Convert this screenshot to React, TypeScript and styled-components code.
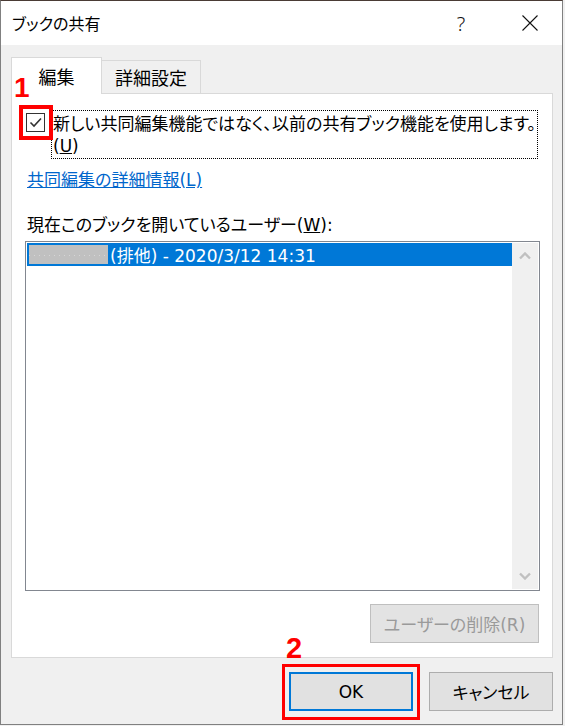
import React from "react";
import styled, { createGlobalStyle } from "styled-components";

const UI_FONT = `"DejaVu Sans", "Noto Sans CJK JP", sans-serif`;

const GlobalStyle = createGlobalStyle`
  html, body { margin: 0; padding: 0; background: #f0f0f0; }
  body { font-family: ${UI_FONT}; }
`;

const Window = styled.div`
  width: 563px;
  height: 725px;
  box-sizing: border-box;
  border: 1px solid #808080;
  border-top-color: #4a3b35;
  background: #f0f0f0;
  display: flex;
  flex-direction: column;
  font-family: ${UI_FONT};
  font-size: 17px;
  color: #000;
  font-feature-settings: "palt";
`;

const TitleBar = styled.div`
  height: 44px;
  flex-shrink: 0;
  background: #fff;
  display: flex;
  align-items: center;
  padding: 0 9px 0 11px;
`;

const Title = styled.div`
  flex: 1;
  font-size: 16px;
  font-family: "Noto Sans CJK JP", sans-serif;
`;

const CaptionButton = styled.div<{ $w: number; $gap?: number }>`
  width: ${(p) => p.$w}px;
  height: 44px;
  margin-right: ${(p) => p.$gap ?? 0}px;
  display: flex;
  align-items: center;
  justify-content: center;
  font-family: "Noto Sans", sans-serif;
  font-weight: 300;
  font-size: 20px;
  color: #111;
`;

const Body = styled.div`
  flex: 1;
  display: flex;
  flex-direction: column;
  padding: 12px 9px 0 10px;
`;

const TabStrip = styled.div`
  display: flex;
  align-items: flex-end;
  height: 36px;
`;

const Tab = styled.div<{ $active?: boolean; $w: number }>`
  box-sizing: border-box;
  width: ${(p) => p.$w}px;
  height: ${(p) => (p.$active ? 37 : 33)}px;
  margin-bottom: ${(p) => (p.$active ? -1 : 0)}px;
  margin-left: ${(p) => (p.$active ? 0 : -1)}px;
  position: relative;
  z-index: ${(p) => (p.$active ? 1 : 0)};
  border: 1px solid #d9d9d9;
  border-bottom: none;
  background: ${(p) => (p.$active ? "#fff" : "#f0f0f0")};
  display: flex;
  align-items: center;
  justify-content: center;
  font-size: 18px;
`;

const Panel = styled.div`
  box-sizing: border-box;
  height: 565px;
  border: 1px solid #d9d9d9;
  background: #fff;
  padding: 16px 12px 0 13px;
  display: flex;
  flex-direction: column;
`;

const CheckRow = styled.div`
  display: flex;
  align-items: flex-start;
  margin-left: 1px;
`;

const CheckWrap = styled.div`
  position: relative;
  margin-top: 3px;
  flex-shrink: 0;
`;

const CheckBox = styled.div`
  box-sizing: border-box;
  width: 19px;
  height: 19px;
  border: 1px solid #333;
  background: #fff;
  display: flex;
  align-items: center;
  justify-content: center;
`;

const RedFrame = styled.div<{ $t: number; $r: number; $b: number; $l: number; $w: number }>`
  position: absolute;
  z-index: 2;
  top: -${(p) => p.$t}px;
  right: -${(p) => p.$r}px;
  bottom: -${(p) => p.$b}px;
  left: -${(p) => p.$l}px;
  border: ${(p) => p.$w}px solid #ff0000;
  pointer-events: none;
`;

const Marker = styled.div<{ $top: number; $left: number; $size: number }>`
  position: absolute;
  z-index: 2;
  top: ${(p) => p.$top}px;
  left: ${(p) => p.$left}px;
  font-family: "Liberation Sans", Arial, sans-serif;
  font-weight: 700;
  font-size: ${(p) => p.$size}px;
  line-height: 1;
  color: #ff0000;
`;

const FocusBox = styled.div`
  flex: 1;
  min-width: 0;
  margin: 0 2px 0 6px;
  border: 1px dotted #000;
  padding: 2px 2px 1px 1px;
  line-height: 22px;
  white-space: nowrap;
`;

const Under = styled.span`
  text-decoration: underline;
`;

const Link = styled.a`
  display: block;
  width: fit-content;
  margin: 10px 0 0 2px;
  line-height: 22px;
  color: #0066cc;
  text-decoration: underline;
  cursor: pointer;
`;

const Label = styled.div`
  margin: 23px 0 0 2px;
  line-height: 22px;
`;

const ListBox = styled.div`
  box-sizing: border-box;
  margin-top: 5px;
  height: 350px;
  border: 1px solid #828790;
  padding: 1px;
  display: flex;
  background: #fff;
`;

const Items = styled.div`
  flex: 1;
`;

const SelectedRow = styled.div`
  height: 23px;
  background: #0078d7;
  color: #fff;
  display: flex;
  align-items: center;
  white-space: nowrap;
`;

const Redacted = styled.div`
  width: 79px;
  height: 19px;
  margin: 0 2px 0 2px;
  background-color: #c0c0c0;
  background-image: radial-gradient(circle, #d6d6d6 0.8px, transparent 1px);
  background-size: 5px 19px;
  background-position: 3px 1px;
  background-repeat: repeat-x;
`;

const ScrollBar = styled.div`
  width: 26px;
  background: #f0f0f0;
  display: flex;
  flex-direction: column;
  justify-content: space-between;
`;

const ScrollArrow = styled.div`
  height: 26px;
  display: flex;
  align-items: center;
  justify-content: center;
`;

const Button = styled.div<{ $primary?: boolean; $disabled?: boolean; $w: number }>`
  box-sizing: border-box;
  width: ${(p) => p.$w}px;
  height: 39px;
  display: flex;
  align-items: center;
  justify-content: center;
  background: ${(p) => (p.$disabled ? "#e3e3e3" : "#e1e1e1")};
  border: ${(p) =>
    p.$primary ? "2px solid #0078d7" : p.$disabled ? "1px solid #bfbfbf" : "1px solid #adadad"};
  color: ${(p) => (p.$disabled ? "#9a9a9a" : "#000")};
  white-space: nowrap;
`;

const DeleteRow = styled.div`
  display: flex;
  justify-content: flex-end;
  margin: 13px 1px 0 0;
`;

const Footer = styled.div`
  display: flex;
  justify-content: flex-end;
  gap: 16px;
  padding-top: 14px;
`;

const ButtonWrap = styled.div`
  position: relative;
`;

const Chevron = ({ down }: { down?: boolean }) => (
  <svg width="12" height="8" viewBox="0 0 12 8">
    <polyline
      points={down ? "1,1.5 6,6.5 11,1.5" : "1,6.5 6,1.5 11,6.5"}
      fill="none"
      stroke="#c0c0c0"
      strokeWidth="2.4"
    />
  </svg>
);

export default function App() {
  return (
    <>
      <GlobalStyle />
      <Window>
        <TitleBar>
          <Title>ブックの共有</Title>
          <CaptionButton $w={40} $gap={26}>?</CaptionButton>
          <CaptionButton $w={46}>
            <svg width="16" height="16" viewBox="0 0 16 16">
              <path d="M0.5 0.5 L15.5 15.5 M15.5 0.5 L0.5 15.5" stroke="#111" strokeWidth="1.1" />
            </svg>
          </CaptionButton>
        </TitleBar>
        <Body>
          <TabStrip>
            <Tab $active $w={91}>編集</Tab>
            <Tab $w={100}>詳細設定</Tab>
          </TabStrip>
          <Panel>
            <CheckRow>
              <CheckWrap>
                <CheckBox>
                  <svg width="17" height="17" viewBox="0 0 17 17">
                    <polyline points="3.5,8.5 7,12 14,4.5" fill="none" stroke="#333" strokeWidth="1.6" />
                  </svg>
                </CheckBox>
                <RedFrame $t={8} $r={8} $b={8} $l={7} $w={4} />
                <Marker $top={-39} $left={-12} $size={28}>1</Marker>
              </CheckWrap>
              <FocusBox>
                新しい共同編集機能ではなく、以前の共有ブック機能を使用します。
                <br />(<Under>U</Under>)
              </FocusBox>
            </CheckRow>
            <Link>共同編集の詳細情報(L)</Link>
            <Label>
              現在このブックを開いているユーザー(<Under>W</Under>):
            </Label>
            <ListBox>
              <Items>
                <SelectedRow>
                  <Redacted />
                  (排他) - 2020/3/12 14:31
                </SelectedRow>
              </Items>
              <ScrollBar>
                <ScrollArrow>
                  <Chevron />
                </ScrollArrow>
                <ScrollArrow>
                  <Chevron down />
                </ScrollArrow>
              </ScrollBar>
            </ListBox>
            <DeleteRow>
              <Button $disabled $w={169}>ユーザーの削除(R)</Button>
            </DeleteRow>
          </Panel>
          <Footer>
            <ButtonWrap>
              <Button $primary $w={124}>OK</Button>
              <RedFrame $t={8} $r={7} $b={9} $l={7} $w={3} />
              <Marker $top={-38} $left={-3} $size={29}>2</Marker>
            </ButtonWrap>
            <Button $w={124}>キャンセル</Button>
          </Footer>
        </Body>
      </Window>
    </>
  );
}
